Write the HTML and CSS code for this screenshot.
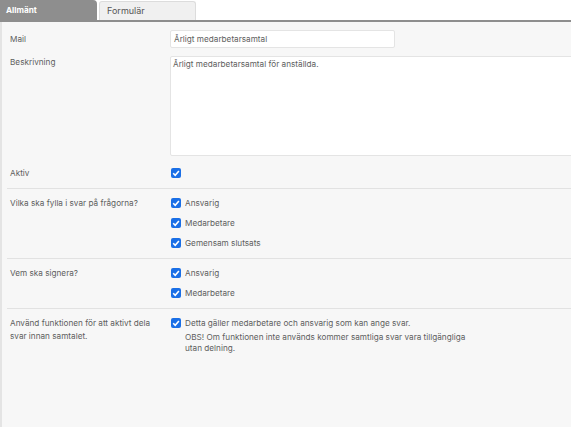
FILE: index.html
```html
<!DOCTYPE html>
<html lang="sv">
<head>
<meta charset="utf-8">
<link rel="stylesheet" href="styles.css">
</head>
<body>
<div class="tabs">
  <div class="tab active">Allmänt</div>
  <div class="tab">Formulär</div>
</div>
<div class="panel">
  <div class="row plain first">
    <div class="label mid">Mail</div>
    <div class="field"><div class="input">Årligt medarbetarsamtal</div></div>
  </div>
  <div class="row plain">
    <div class="label top">Beskrivning</div>
    <div class="field"><div class="textarea">Årligt medarbetarsamtal för anställda.</div></div>
  </div>
  <div class="row sep aktiv">
    <div class="label">Aktiv</div>
    <div class="field"><div class="check"><span class="box"></span></div></div>
  </div>
  <div class="row sep">
    <div class="label">Vilka ska fylla i svar på frågorna?</div>
    <div class="field">
      <div class="check"><span class="box"></span>Ansvarig</div>
      <div class="check"><span class="box"></span>Medarbetare</div>
      <div class="check"><span class="box"></span>Gemensam slutsats</div>
    </div>
  </div>
  <div class="row sep">
    <div class="label">Vem ska signera?</div>
    <div class="field">
      <div class="check"><span class="box"></span>Ansvarig</div>
      <div class="check"><span class="box"></span>Medarbetare</div>
    </div>
  </div>
  <div class="row">
    <div class="label">Använd funktionen för att aktivt dela svar innan samtalet.</div>
    <div class="field">
      <div class="check"><span class="box"></span>Detta gäller medarbetare och ansvarig som kan ange svar.</div>
      <p class="note">OBS! Om funktionen inte används kommer samtliga svar vara tillgängliga utan delning.</p>
    </div>
  </div>
</div>
</body>
</html>
```

FILE: styles.css
```css
html, body {
  margin: 0;
  padding: 0;
  overflow: hidden;
  background: #ffffff;
  font-family: Inter, "Noto Sans", sans-serif;
  font-size: 8.2px;
  color: #5e5e5e;
}

.tabs {
  display: flex;
  align-items: flex-end;
  height: 20px;
  border-bottom: 2px solid #8e8e8e;
}

.tab {
  box-sizing: border-box;
  width: 97px;
  height: 19px;
  margin-left: 2px;
  padding: 0 7px;
  line-height: 18px;
  font-size: 9px;
  background: #f0f0f0;
  border: 1px solid #dcdcdc;
  border-bottom: none;
  border-radius: 3px 3px 0 0;
  color: #555;
}

.tab.active {
  height: 20px;
  margin-left: 0;
  padding-left: 6px;
  font-size: 8.2px;
  background: #8e8e8e;
  border: none;
  border-radius: 0 4px 0 0;
  color: #ffffff;
  font-weight: 700;
  line-height: 20px;
}

.panel {
  height: 405px;
  background: #f7f7f7;
  border-left: 2px solid #e4e4e4;
  padding-left: 5px;
}

.row {
  display: grid;
  grid-template-columns: 163px 1fr;
  padding: 4px 0 5px;
}

.row.sep {
  border-bottom: 1px solid #e2e2e2;
}

.row.plain {
  padding: 0;
}

.row.first {
  padding-top: 8px;
  padding-bottom: 8px;
}

.row.aktiv {
  padding-top: 7px;
}

.label {
  padding-left: 3px;
  padding-top: 3.5px;
  line-height: 13px;
  max-width: 150px;
}

.label.mid {
  padding-top: 2.5px;
}

.label.top {
  padding-top: 0;
}

.input {
  box-sizing: border-box;
  width: 225px;
  height: 18px;
  padding: 0 3px;
  line-height: 17px;
  background: #ffffff;
  border: 1px solid #e4e4e4;
  border-radius: 2px;
}

.textarea {
  box-sizing: border-box;
  width: 420px;
  height: 100px;
  padding: 1px 2px;
  line-height: 12px;
  background: #ffffff;
  border: 1px solid #e4e4e4;
  border-radius: 2px;
}

.check {
  display: flex;
  align-items: center;
  height: 20px;
  gap: 4px;
  padding-left: 1px;
}

.box {
  flex: none;
  width: 10px;
  height: 10px;
  border-radius: 2px;
  background: #1a6fe6 url("data:image/svg+xml,%3Csvg xmlns='http://www.w3.org/2000/svg' viewBox='0 0 10 10'%3E%3Cpath d='M2.2 5.2 L4.2 7.2 L7.9 2.9' fill='none' stroke='white' stroke-width='1.6'/%3E%3C/svg%3E") center/10px 10px no-repeat;
}

.note {
  margin: -1px 0 0 15px;
  max-width: 290px;
  line-height: 11px;
}
```
